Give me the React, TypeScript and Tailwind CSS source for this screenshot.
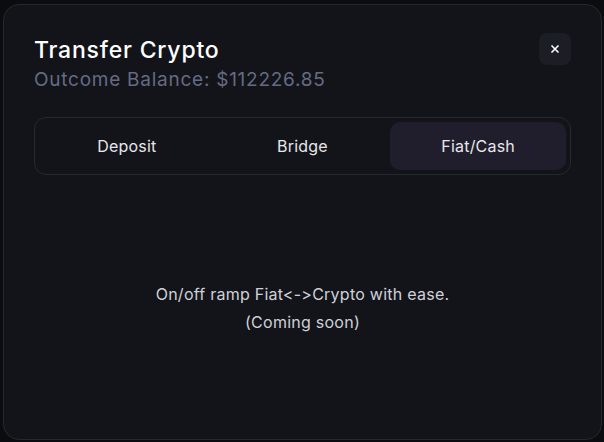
import { useState } from "react";

const tabs = ["Deposit", "Bridge", "Fiat/Cash"];

export default function App() {
  const [active, setActive] = useState("Fiat/Cash");

  return (
    <div className="flex h-[442px] w-[604px] bg-[#0b0c10] pt-[4px] pb-[2px] pl-[3px] pr-[2px] font-['Inter',sans-serif] [font-feature-settings:'calt'_0,'liga'_0]">
      <div className="flex flex-1 flex-col rounded-2xl border border-[#262830] bg-[#131419] px-[30px] pt-[28px]">
        {/* Header */}
        <div className="flex items-start justify-between">
          <div>
            <h1 className="text-[23px] leading-[34px] font-medium tracking-[0.8px] text-white">
              Transfer Crypto
            </h1>
            <p className="text-[19px] leading-[26px] tracking-[0.75px] text-[#656b83]">
              Outcome Balance: $112226.85
            </p>
          </div>
          <button className="flex h-8 w-8 items-center justify-center rounded-lg bg-[#1c1e25] text-white">
            <svg width="10" height="10" viewBox="0 0 10 10">
              <path d="M1.5 1.5 8.5 8.5M8.5 1.5 1.5 8.5" stroke="currentColor" strokeWidth="1.6" />
            </svg>
          </button>
        </div>

        {/* Tabs */}
        <div className="mt-[24px] grid grid-cols-3 rounded-xl border border-[#262830] p-[4px]">
          {tabs.map((t) => (
            <button
              key={t}
              onClick={() => setActive(t)}
              className={`h-12 rounded-[10px] text-[16px] tracking-[0.2px] text-[#e6e7ea] ${
                active === t ? "bg-[#201e2c]" : ""
              }`}
            >
              {t}
            </button>
          ))}
        </div>

        {/* Content */}
        <div className="flex flex-1 flex-col items-center justify-center pt-[2px] text-center text-[16px] leading-[28px] tracking-[0.25px] text-[#cfd1d8]">
          <p>On/off ramp Fiat&lt;-&gt;Crypto with ease.</p>
          <p>(Coming soon)</p>
        </div>
      </div>
    </div>
  );
}
